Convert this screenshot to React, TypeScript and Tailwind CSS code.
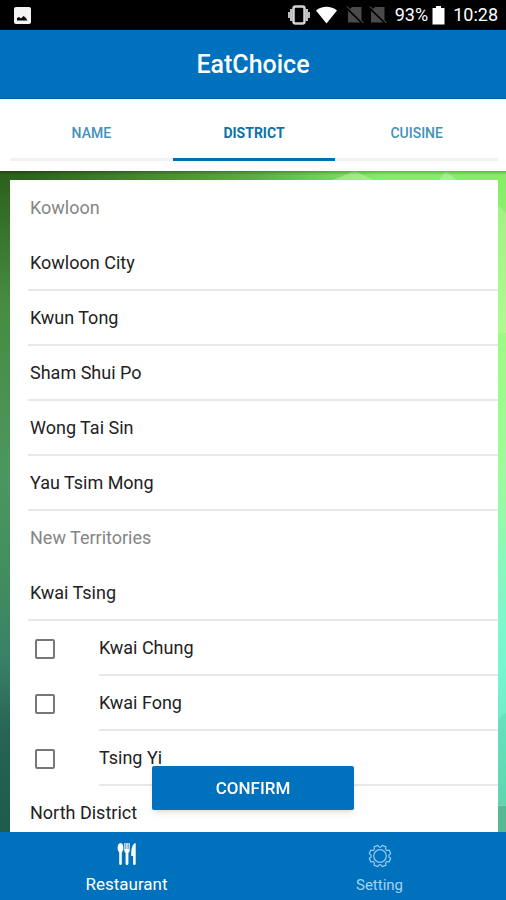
import React from "react";

const tabs = ["NAME", "DISTRICT", "CUISINE"];

type Row = { label: string; kind: "heading" | "group" | "option" };

const rows: Row[] = [
  { label: "Kowloon", kind: "heading" },
  { label: "Kowloon City", kind: "group" },
  { label: "Kwun Tong", kind: "group" },
  { label: "Sham Shui Po", kind: "group" },
  { label: "Wong Tai Sin", kind: "group" },
  { label: "Yau Tsim Mong", kind: "group" },
  { label: "New Territories", kind: "heading" },
  { label: "Kwai Tsing", kind: "group" },
  { label: "Kwai Chung", kind: "option" },
  { label: "Kwai Fong", kind: "option" },
  { label: "Tsing Yi", kind: "option" },
  { label: "North District", kind: "group" },
];

function NoSim() {
  return (
    <svg className="h-[18px] w-[18px]" viewBox="0 0 18 18" aria-hidden="true">
      <path d="M6 1h9.500v15.500H2V5z" fill="#4a4a4a" />
      <path d="M0 1l17 16.500" stroke="#000" strokeWidth="2.400" />
      <path d="M1 0.500l16.500 16.500" stroke="#666" strokeWidth="1" />
    </svg>
  );
}

function StatusBar() {
  return (
    <div className="flex h-[30px] shrink-0 items-center justify-between bg-black pl-[14px] pr-2 text-white">
      <svg className="h-[17px] w-[17px]" viewBox="0 0 17 17" aria-hidden="true">
        <rect width="17" height="17" rx="2" fill="#f4f4f4" />
        <path d="M3 13.500V11l2-1 2 1.500L9.500 9l2 1.500 2 3z" fill="#000" />
      </svg>
      <div className="flex items-center">
        <svg className="h-5 w-6" viewBox="0 0 24 20" aria-hidden="true">
          <rect x="6.500" y="1.500" width="11" height="17" rx="2" fill="none" stroke="#d4d4d4" strokeWidth="2.500" />
          <path d="M4.300 4v12M19.700 4v12" stroke="#c8c8c8" strokeWidth="2.500" />
          <path d="M2 7v6M22 7v6" stroke="#bbb" strokeWidth="2" />
        </svg>
        <svg className="ml-1 h-[18px] w-[23px]" viewBox="0 0 23 18" aria-hidden="true">
          <path d="M11.500 17.500L1 4.500C7 -.5 16 -.5 22 4.500z" fill="#fff" />
        </svg>
        <div className="ml-2 flex gap-[5px]">
          <NoSim />
          <NoSim />
        </div>
        <span className="ml-2 text-lg leading-5">93%</span>
        <svg className="ml-1 h-[19px] w-[13px]" viewBox="0 0 13 19" aria-hidden="true">
          <path d="M4 0h5v2h3.500v16.500H.5V2H4z" fill="#fff" />
        </svg>
        <span className="ml-2 text-lg leading-5">10:28</span>
      </div>
    </div>
  );
}

function Backdrop() {
  return (
    <svg
      className="absolute inset-0 h-full w-full"
      viewBox="0 0 506 662"
      preserveAspectRatio="none"
      aria-hidden="true"
    >
      <defs>
        <linearGradient id="dark" x1="0" y1="0" x2="0" y2="1">
          <stop offset="0" stopColor="#2b6019" />
          <stop offset="0.2" stopColor="#478c40" />
          <stop offset="0.46" stopColor="#4d9660" />
          <stop offset="0.62" stopColor="#428d5f" />
          <stop offset="0.74" stopColor="#398068" />
          <stop offset="0.85" stopColor="#286353" />
          <stop offset="1" stopColor="#1c5c4a" />
        </linearGradient>
        <linearGradient id="light" x1="0" y1="0" x2="0" y2="1">
          <stop offset="0" stopColor="#85ec65" />
          <stop offset="0.25" stopColor="#9ffa83" />
          <stop offset="0.45" stopColor="#a0fa9a" />
          <stop offset="0.6" stopColor="#86f8c0" />
          <stop offset="0.75" stopColor="#78f5d2" />
          <stop offset="1" stopColor="#62d6b2" />
        </linearGradient>
        <linearGradient id="fade" x1="0" y1="0" x2="1" y2="0">
          <stop offset="0.04" stopColor="#000" />
          <stop offset="0.5" stopColor="#888" />
          <stop offset="0.75" stopColor="#fff" />
        </linearGradient>
        <linearGradient id="edge" x1="0" y1="0" x2="0" y2="1">
          <stop offset="0" stopColor="#000" stopOpacity="0.250" />
          <stop offset="1" stopColor="#000" stopOpacity="0" />
        </linearGradient>
        <mask id="side">
          <rect width="506" height="662" fill="url(#fade)" />
        </mask>
      </defs>
      <rect width="506" height="662" fill="url(#dark)" />
      <rect width="506" height="662" fill="url(#light)" mask="url(#side)" />
      <path d="M355 0l20 10h-45z" fill="#c2f8a8" opacity="0.500" />
      <path d="M446 0l12 10h-20z" fill="#c2f8a8" opacity="0.500" />
      <path d="M498 34l8 8v120h-8z" fill="#c8fcb0" opacity="0.350" />
      <path d="M498 550q4-6 8-7v92h-8z" fill="#4fbfa0" opacity="0.250" />
      <rect x="498" y="636" width="8" height="26" fill="#58b895" />
      <rect width="506" height="4" fill="url(#edge)" />
    </svg>
  );
}

function ListRow({ label, kind }: Row) {
  if (kind === "heading") {
    return <h2 className="flex h-[55px] items-center pb-0.5 pl-5 text-lg text-[#858585]">{label}</h2>;
  }

  if (kind === "option") {
    return (
      <label className="flex h-[55px] items-stretch pl-[25px]">
        <input
          type="checkbox"
          className="mr-[44px] h-5 w-5 shrink-0 appearance-none self-center rounded-[2px] border-2 border-[#777] bg-white checked:bg-[#0071bc]"
        />
        <span className="flex flex-1 items-center border-b-2 border-[#e8e8e8]">{label}</span>
      </label>
    );
  }

  return (
    <div className="flex h-[55px] pl-[18px]">
      <span className="flex flex-1 items-center border-b-2 border-[#e8e8e8] pl-0.5">{label}</span>
    </div>
  );
}

function ForkKnife() {
  return (
    <svg className="h-6 w-5" viewBox="0 0 20 24" fill="#fff" aria-hidden="true">
      <path d="M3.500 1C1.600 1 .6 3.500.6 6c0 2 .7 3.500 1.600 4.300V21.500q0 1.500 1.300 1.500t1.300-1.500V10.300C5.700 9.500 6.400 8 6.400 6c0-2.500-1-5-2.900-5z" />
      <path d="M7.300 1h1.200v6h.8V1h1.400v6h.8V1h1.200v7.500q0 1.700-1.300 2.300v10.700q0 1.500-1.400 1.500t-1.400-1.500V10.800Q7.300 10.200 7.300 8.500z" />
      <path d="M18.700 1v20.500q0 1.500-1.300 1.500t-1.300-1.500V14h-1.800c-.2-6 .5-12 4.400-13z" />
    </svg>
  );
}

function Gear() {
  return (
    <svg
      className="h-6 w-6"
      viewBox="0 0 24 24"
      fill="none"
      stroke="#8fc6ee"
      strokeWidth="1.300"
      strokeLinejoin="round"
      aria-hidden="true"
    >
      <path d="M9.700 1.300Q12 5.500 14.300 1.300L17.900 2.800Q16.600 7.400 21.200 6.100L22.700 9.700Q18.500 12 22.700 14.300L21.200 17.900Q16.600 16.600 17.900 21.200L14.300 22.700Q12 18.500 9.700 22.700L6.100 21.200Q7.400 16.600 2.800 17.900L1.300 14.300Q5.500 12 1.300 9.700L2.800 6.100Q7.400 7.400 6.100 2.800z" />
      <circle cx="12" cy="12" r="6.300" />
    </svg>
  );
}

function App() {
  return (
    <div className="flex h-screen flex-col overflow-hidden bg-white font-[Roboto,sans-serif] text-lg text-[#222]">
      <StatusBar />
      <header className="flex h-[69px] shrink-0 items-center justify-center border-b border-[#005c9e] bg-[#0071bc] pt-0.5">
        <h1 className="text-[25px] font-medium text-white">EatChoice</h1>
      </header>

      <nav className="flex h-[72px] shrink-0 pb-[10px] pl-[10px] pr-2" aria-label="Search by">
        {tabs.map((tab) => (
          <button
            key={tab}
            type="button"
            className={
              tab === "DISTRICT"
                ? "flex-1 border-b-[3px] border-[#0071b0] pt-2 text-sm font-bold text-[#0b73a8]"
                : "flex-1 border-b-[3px] border-[#f1f1f1] pt-2 text-sm font-medium text-[#4591b8]"
            }
          >
            {tab}
          </button>
        ))}
      </nav>

      <main className="relative flex min-h-0 flex-1 flex-col">
        <Backdrop />
        <div className="relative ml-[10px] mr-2 mt-[9px] min-h-0 flex-1 overflow-y-auto bg-white pt-px [scrollbar-width:none]">
          {rows.map((row) => (
            <ListRow key={row.label} {...row} />
          ))}
        </div>
        <button
          type="button"
          className="absolute bottom-[22px] left-[30%] right-[30%] h-11 rounded-[2px] bg-[#0071bc] text-[17px] font-medium text-white shadow-md"
        >
          CONFIRM
        </button>
      </main>

      <footer className="flex h-[68px] shrink-0 bg-[#0071bc]">
        <a href="#restaurant" className="flex flex-1 flex-col items-center pt-[10px] text-white">
          <ForkKnife />
          <span className="mt-1 text-[17px] leading-7">Restaurant</span>
        </a>
        <a href="#setting" className="flex flex-1 flex-col items-center pt-3 text-[#a5d2f2]">
          <Gear />
          <span className="mt-1 text-[15px] leading-[26px]">Setting</span>
        </a>
      </footer>
    </div>
  );
}

export default App;
